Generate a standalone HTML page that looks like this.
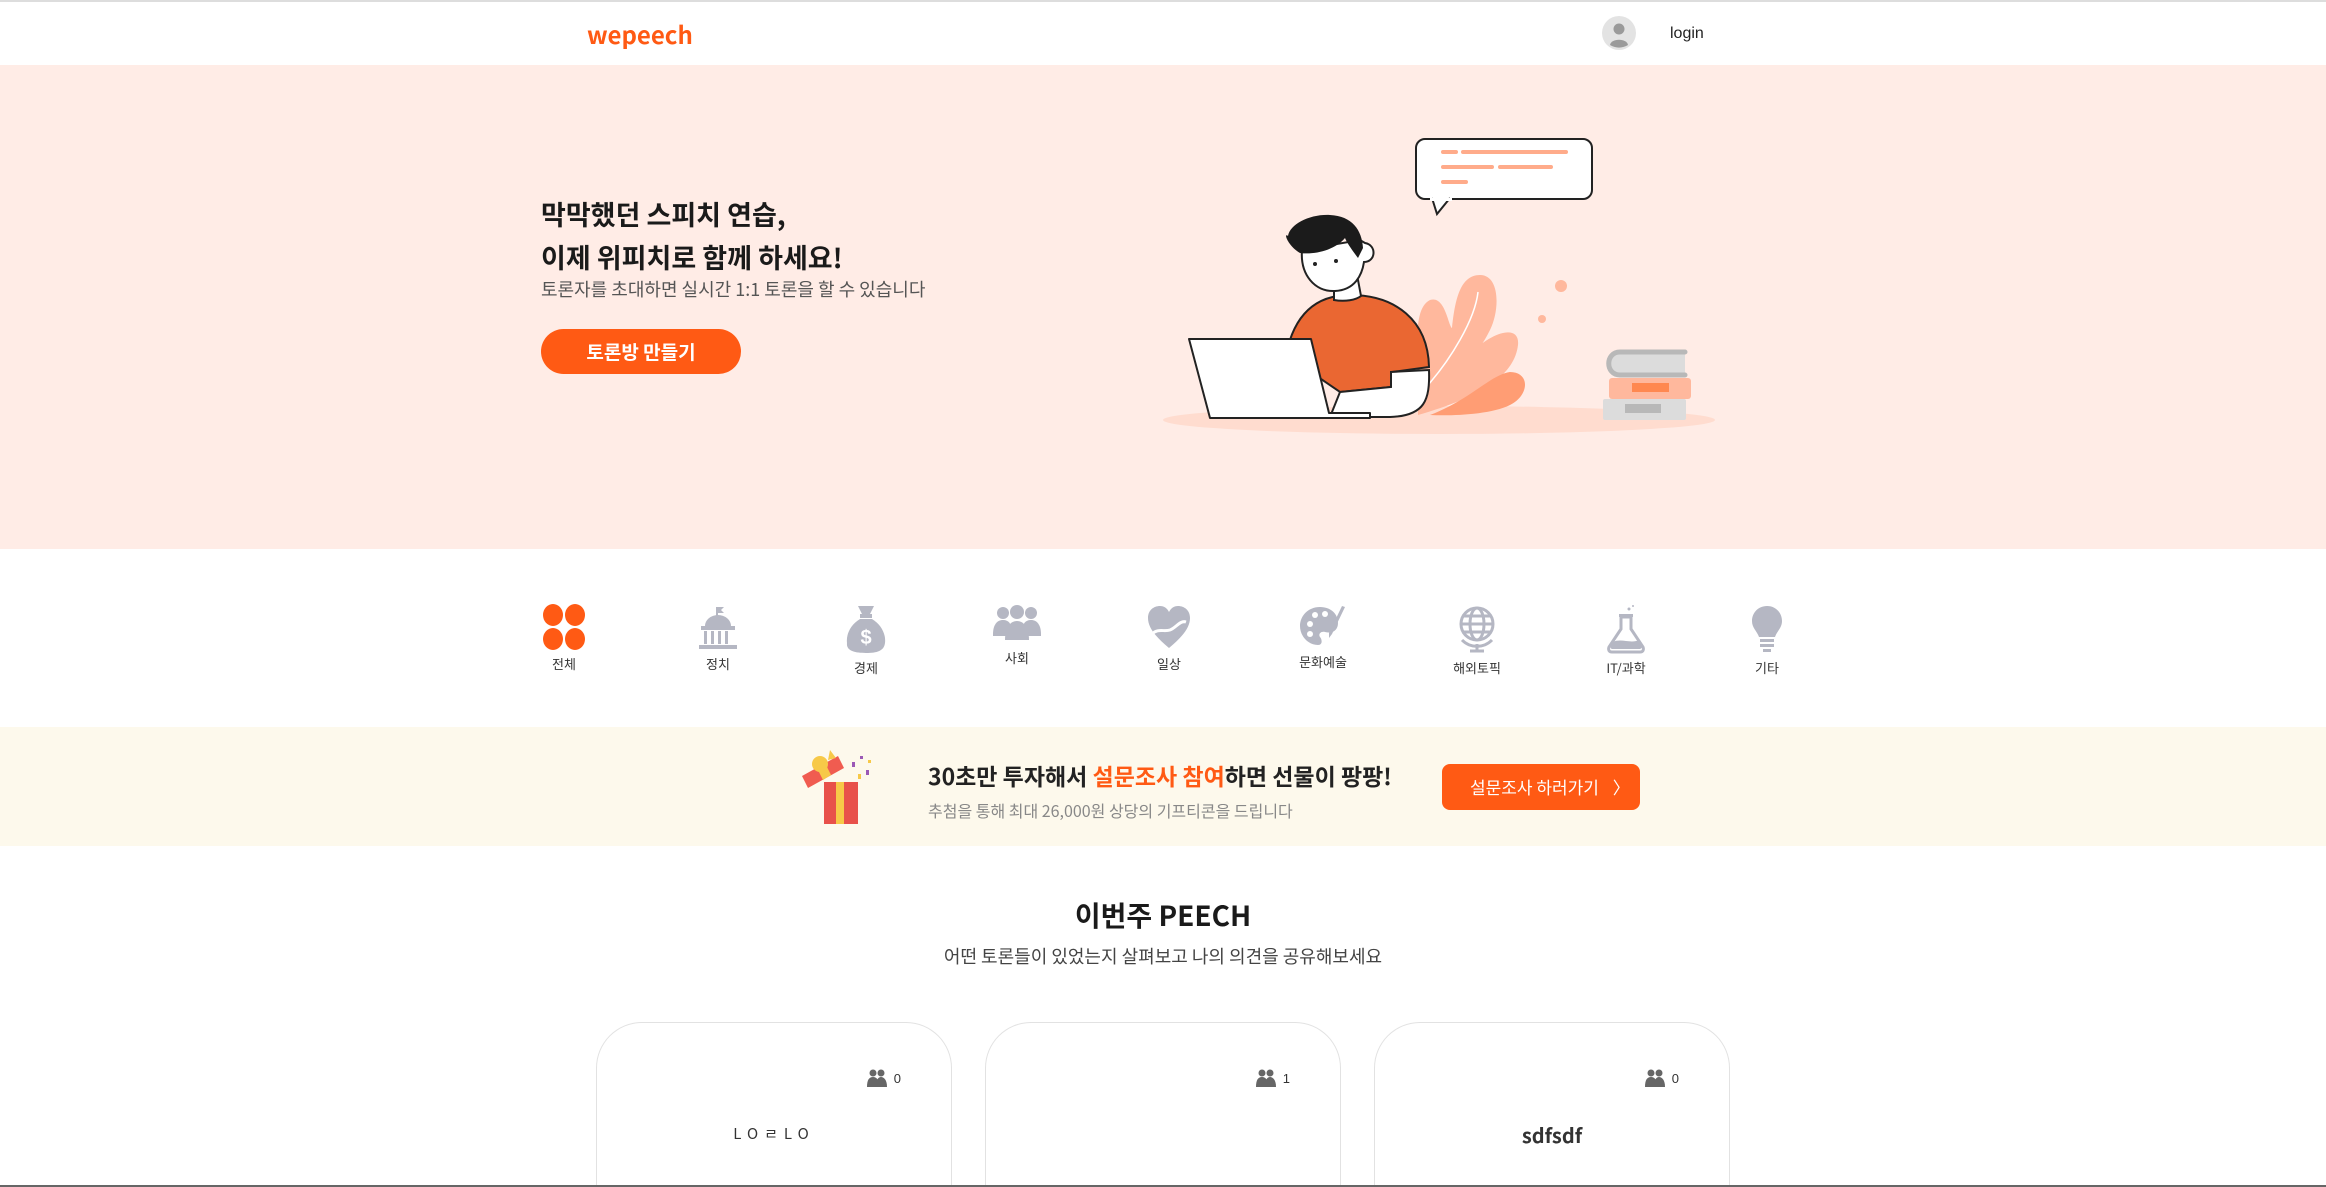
<!DOCTYPE html>
<html><head><meta charset="utf-8">
<style>
*{margin:0;padding:0;box-sizing:border-box}
html{width:2326px;height:1187px;overflow:hidden}
body{width:2326px;height:1187px;overflow:hidden;background:#fff;font-family:"Liberation Sans","Noto Sans CJK KR",sans-serif;position:relative;color:#222}
.abs{position:absolute}
.kr{font-family:"Noto Sans CJK KR","Liberation Sans",sans-serif}
#hdr{left:0;top:0;width:2326px;height:65px;border-top:2px solid #ddd;background:#fff}
#hero{left:0;top:65px;width:2326px;height:484px;background:#ffece6}
#banner{left:0;top:727px;width:2326px;height:119px;background:#fdf9ec}
.cat{position:absolute;top:604px;width:100px;text-align:center;font-size:13px;color:#333}
.cat svg{display:block;margin:0 auto 4px}
.card{position:absolute;top:1022px;width:356px;height:163px;border:1.5px solid #e2e2e2;border-bottom:none;border-radius:46px 46px 0 0;background:#fff}
.cnt{position:absolute;top:46px;right:50px;font-size:13px;color:#333;display:flex;align-items:center;gap:6px}
.ctitle{position:absolute;top:100px;width:100%;text-align:center}
</style></head><body>
<div id="hdr" class="abs"></div>
<div class="abs kr" style="left:587px;top:16px;font-size:24px;font-weight:bold;color:#ff5a14">wepeech</div>
<svg class="abs" style="left:1602px;top:16px" width="34" height="34" viewBox="0 0 34 34"><circle cx="17" cy="17" r="17" fill="#e3e3e3"/><circle cx="17" cy="13" r="5.5" fill="#9a9a9a"/><path d="M8 29c1-7 17-7 18 0a17 17 0 0 1-18 0z" fill="#9a9a9a"/></svg>
<div class="abs" style="left:1670px;top:25px;font-size:16px;color:#222">login</div>

<div id="hero" class="abs"></div>
<div class="abs kr" style="left:541px;top:192px;font-size:27px;font-weight:bold;line-height:43px;color:#1a1a1a">막막했던 스피치 연습,<br>이제 위피치로 함께 하세요!</div>
<div class="abs kr" style="left:541px;top:276px;font-size:18px;color:#555">토론자를 초대하면 실시간 1:1 토론을 할 수 있습니다</div>
<div class="abs kr" style="left:541px;top:329px;width:200px;height:45px;border-radius:23px;background:#ff5a14;color:#fff;font-size:19px;font-weight:bold;text-align:center;line-height:45px">토론방 만들기</div>

<svg class="abs" style="left:0;top:0" width="2326" height="560">
<ellipse cx="1439" cy="420" rx="276" ry="14" fill="#ffdccf"/>
<rect x="1416" y="139" width="176" height="60" rx="9" fill="#fff" stroke="#222" stroke-width="2"/>
<path d="M1432 198 L1437 214 L1450 198" fill="#fff" stroke="#222" stroke-width="2"/>
<rect x="1430" y="198" width="22" height="3" fill="#fff"/>
<g stroke="#ffab8a" stroke-width="4" stroke-linecap="round"><path d="M1443 152h13M1463 152h103M1443 167h49M1500 167h51M1443 182h23"/></g>
<circle cx="1561" cy="286" r="6" fill="#ffb89d"/><circle cx="1542" cy="319" r="4" fill="#ffb89d"/>
<path d="M1418 410 C1420 360 1410 310 1430 300 C1445 295 1448 325 1452 328 C1455 300 1460 275 1480 275 C1500 275 1500 310 1490 330 C1480 350 1470 360 1472 352 C1495 330 1520 325 1518 345 C1514 380 1470 400 1418 415Z" fill="#ffb89d"/>
<path d="M1430 415 C1470 400 1490 375 1510 372 C1530 372 1530 395 1510 405 C1490 415 1450 416 1430 415Z" fill="#ff9d74"/>
<path d="M1428 385 C1450 360 1475 320 1478 292" stroke="#fff" stroke-width="1.5" fill="none"/>
<path d="M1286 355 C1295 310 1320 295 1350 295 C1395 295 1428 320 1429 367 L1392 372 L1391 387 L1340 392 Z" fill="#ea6732" stroke="#222" stroke-width="2"/>
<path d="M1340 392 L1391 387 L1391 372 L1429 370 C1430 400 1425 416 1390 417 L1330 417 Z" fill="#fff" stroke="#222" stroke-width="2"/>
<path d="M1334 285 L1334 300 C1345 302 1356 300 1361 296 L1358 280 Z" fill="#fff" stroke="#222" stroke-width="2"/>
<path d="M1302 250 C1300 275 1315 292 1335 291 C1355 290 1362 275 1364 262 C1376 262 1377 245 1365 243 L1360 240 L1302 250Z" fill="#fff" stroke="#222" stroke-width="2"/>
<path d="M1300 253 C1288 246 1283 232 1288 236 C1290 224 1310 214 1330 215 C1352 216 1362 230 1363 248 L1358 258 C1352 250 1347 243 1345 238 C1335 250 1315 255 1300 253Z" fill="#1b1b1b"/>
<circle cx="1315" cy="264" r="2" fill="#222"/><circle cx="1336" cy="261" r="2" fill="#222"/>
<path d="M1189 339 L1311 339 L1329 413 L1370 413 L1370 418 L1210 418 Z" fill="#fff" stroke="#222" stroke-width="2" stroke-linejoin="round"/>
<rect x="1603" y="399" width="83" height="21" rx="2" fill="#dcdcdc"/><rect x="1625" y="404" width="36" height="9" fill="#b8b8b8"/>
<rect x="1609" y="378" width="82" height="21" rx="3" fill="#ffb89d"/><rect x="1632" y="383" width="37" height="9" fill="#ff8850"/>
<path d="M1685 352 L1620 352 C1605 352 1605 375 1620 375 L1685 375" fill="#dcdcdc" stroke="#b8b8b8" stroke-width="5" stroke-linecap="round"/>
</svg>

<div class="cat kr" style="left:514px"><svg width="46" height="46" viewBox="0 0 46 46"><g fill="#ff5a14"><ellipse cx="12" cy="11" rx="10" ry="11"/><ellipse cx="34" cy="11" rx="10" ry="11"/><ellipse cx="12" cy="35" rx="10" ry="11"/><ellipse cx="34" cy="35" rx="10" ry="11"/></g></svg>전체</div>
<div class="cat kr" style="left:668px"><svg width="46" height="46" viewBox="0 0 46 46"><g fill="#b5b7c3"><path d="M22 3h7l-3 3 3 3h-7z"/><rect x="21" y="3" width="2" height="10"/><path d="M10 22a13 11 0 0 1 26 0z"/><rect x="6" y="22" width="34" height="4"/><rect x="9" y="27" width="3" height="13"/><rect x="16" y="27" width="3" height="13"/><rect x="23" y="27" width="3" height="13"/><rect x="30" y="27" width="3" height="13"/><rect x="4" y="41" width="38" height="4"/></g></svg>정치</div>
<div class="cat kr" style="left:816px"><svg width="46" height="50" viewBox="0 0 46 50"><g fill="#b5b7c3"><path d="M15 2h16l-4 8h-8z"/><rect x="17" y="10" width="12" height="4"/><path d="M17 15h12c10 6 14 16 13 24-1 8-8 10-19 10S3 47 4 39c-1-8 3-18 13-24z"/></g><text x="23" y="40" font-size="20" font-weight="bold" fill="#fff" text-anchor="middle" font-family="Liberation Sans">$</text></svg>경제</div>
<div class="cat kr" style="left:967px"><svg width="50" height="40" viewBox="0 0 50 40"><g fill="#b5b7c3"><circle cx="11" cy="9" r="6"/><circle cx="39" cy="9" r="6"/><circle cx="25" cy="8" r="7"/><path d="M1 30c0-9 4-14 10-14s8 4 8 8v8H1z"/><path d="M49 30c0-9-4-14-10-14s-8 4-8 8v8h18z"/><path d="M13 36c0-12 5-19 12-19s12 7 12 19z"/></g></svg>사회</div>
<div class="cat kr" style="left:1119px"><svg width="46" height="46" viewBox="0 0 46 46"><path d="M23 44 C10 33 2 24 2 14 C2 6 8 2 14 2 C18 2 21 4 23 8 C25 4 28 2 32 2 C38 2 44 6 44 14 C44 24 36 33 23 44Z" fill="#b5b7c3"/><path d="M6 30c6-6 12-2 18-4s10-10 16-8" stroke="#fff" stroke-width="3" fill="none"/></svg>일상</div>
<div class="cat kr" style="left:1273px"><svg width="50" height="44" viewBox="0 0 50 44"><path d="M22 3C10 3 2 12 2 22s8 19 18 19c5 0 4-6 2-8-2-3 1-6 5-5 8 2 13-2 13-9C40 10 33 3 22 3z" fill="#b5b7c3"/><g fill="#fff"><circle cx="12" cy="20" r="3"/><circle cx="17" cy="11" r="3"/><circle cx="27" cy="10" r="3"/><circle cx="12" cy="30" r="3"/></g><path d="M47 3 L34 30 L31 34 L31 29 L44 2z" fill="#b5b7c3"/></svg>문화예술</div>
<div class="cat kr" style="left:1427px"><svg width="46" height="50" viewBox="0 0 46 50"><g fill="none" stroke="#b5b7c3" stroke-width="3"><circle cx="23" cy="20" r="16"/><ellipse cx="23" cy="20" rx="7" ry="16"/><path d="M7 20h32M10 12h26M10 28h26"/><path d="M8 36a21 21 0 0 0 30 0"/><path d="M23 40v6M16 47h14"/></g></svg>해외토픽</div>
<div class="cat kr" style="left:1576px"><svg width="46" height="50" viewBox="0 0 46 50"><g fill="#b5b7c3"><rect x="16" y="10" width="14" height="3"/><path d="M18 13h10v12l12 18c1 3 0 5-3 5H9c-3 0-4-2-3-5l12-18z" fill="none" stroke="#b5b7c3" stroke-width="3"/><path d="M10 38c8-4 18 2 26-2l3 6c0 2-1 3-3 3H10c-2 0-3-1-2-3z"/><circle cx="26" cy="5" r="1.5"/><circle cx="30" cy="2" r="1"/></g></svg>IT/과학</div>
<div class="cat kr" style="left:1717px"><svg width="46" height="50" viewBox="0 0 46 50"><g fill="#b5b7c3"><path d="M23 2C14 2 8 9 8 17c0 7 5 10 7 16h16c2-6 7-9 7-16 0-8-6-15-15-15z"/><rect x="16" y="35" width="14" height="3"/><rect x="16" y="40" width="14" height="3"/><rect x="19" y="45" width="8" height="3"/></g></svg>기타</div>

<div id="banner" class="abs"></div>
<svg class="abs" style="left:800px;top:748px" width="76" height="78" viewBox="0 0 76 78">
<rect x="24" y="34" width="34" height="42" fill="#e8514a"/><rect x="36" y="34" width="8" height="42" fill="#f7c948"/>
<path d="M2 28 L38 8 L44 20 L8 40 Z" fill="#f05c50"/><path d="M17 20 L25 15 L31 27 L23 32Z" fill="#f7c948"/>
<circle cx="20" cy="16" r="8" fill="#f7c948"/><path d="M30 2 L36 10 L28 12Z" fill="#f7c948"/>
<g fill="#9b59b6"><rect x="52" y="14" width="3" height="5"/><rect x="60" y="8" width="3" height="3"/><rect x="66" y="22" width="3" height="5"/></g><g fill="#f7c948"><rect x="58" y="26" width="3" height="5"/><rect x="68" y="12" width="3" height="3"/></g>
</svg>
<div class="abs kr" style="left:928px;top:758px;font-size:23px;font-weight:bold;color:#222">30초만 투자해서 <span style="color:#ff5a14">설문조사 참여</span>하면 선물이 팡팡!</div>
<div class="abs kr" style="left:928px;top:798px;font-size:16px;color:#888">추첨을 통해 최대 26,000원 상당의 기프티콘을 드립니다</div>
<div class="abs kr" style="left:1442px;top:764px;width:198px;height:46px;border-radius:8px;background:#ff5a14;color:#fff;font-size:17px;line-height:46px;padding-left:28px">설문조사 하러가기 <span style="margin-left:10px">〉</span></div>

<div class="abs kr" style="left:0;width:2326px;top:895px;text-align:center;font-size:28px;font-weight:bold;color:#1a1a1a">이번주 PEECH</div>
<div class="abs kr" style="left:0;width:2326px;top:943px;text-align:center;font-size:18px;color:#444">어떤 토론들이 있었는지 살펴보고 나의 의견을 공유해보세요</div>

<div class="card" style="left:596px"><div class="cnt"><svg width="22" height="18" viewBox="0 0 22 18"><g fill="#666"><circle cx="7" cy="4" r="3.5"/><circle cx="15" cy="4" r="3.5"/><path d="M1 18c0-7 2-10 6-10s6 3 6 10z"/><path d="M10 18c0-7 2-10 5-10s6 3 6 10z"/></g></svg>0</div><div class="ctitle kr" style="font-size:15px;letter-spacing:6px;color:#333">LOㄹLO</div></div>
<div class="card" style="left:985px"><div class="cnt"><svg width="22" height="18" viewBox="0 0 22 18"><g fill="#666"><circle cx="7" cy="4" r="3.5"/><circle cx="15" cy="4" r="3.5"/><path d="M1 18c0-7 2-10 6-10s6 3 6 10z"/><path d="M10 18c0-7 2-10 5-10s6 3 6 10z"/></g></svg>1</div></div>
<div class="card" style="left:1374px"><div class="cnt"><svg width="22" height="18" viewBox="0 0 22 18"><g fill="#666"><circle cx="7" cy="4" r="3.5"/><circle cx="15" cy="4" r="3.5"/><path d="M1 18c0-7 2-10 6-10s6 3 6 10z"/><path d="M10 18c0-7 2-10 5-10s6 3 6 10z"/></g></svg>0</div><div class="ctitle kr" style="font-size:20px;font-weight:bold;color:#333;top:97px">sdfsdf</div></div>
<div class="abs" style="left:0;top:1185px;width:2326px;height:2px;background:#666"></div>
</body></html>
